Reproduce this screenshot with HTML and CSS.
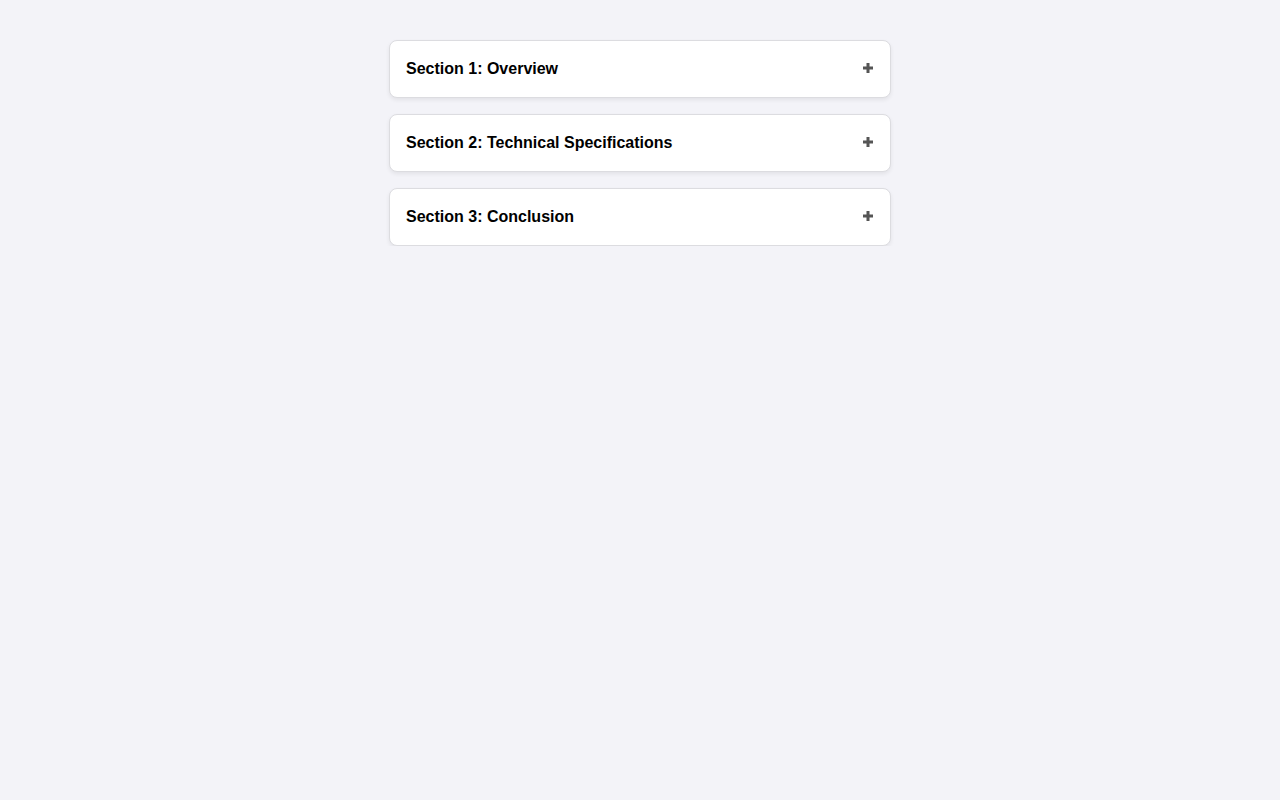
FILE: index.html
```html
<!DOCTYPE html>
<html lang="en">

<head>
	<meta charset="UTF-8">
	<title>Accordion</title>

	<link rel="stylesheet" href="styles.css">
</head>

<body>

	<main class="accordion">
		<div class="item">
			<div class="header">
				<span class="title">Section 1: Overview</span>
				<svg class="toggle" width="10" height="10" viewBox="0 0 10 10"><path d="M5 0v10M0 5h10" /></svg>
			</div>
		</div>

		<div class="item">
			<div class="header">
				<span class="title">Section 2: Technical Specifications</span>
				<svg class="toggle" width="10" height="10" viewBox="0 0 10 10"><path d="M5 0v10M0 5h10" /></svg>
			</div>
		</div>

		<div class="item">
			<div class="header">
				<span class="title">Section 3: Conclusion</span>
				<svg class="toggle" width="10" height="10" viewBox="0 0 10 10"><path d="M5 0v10M0 5h10" /></svg>
			</div>
		</div>
	</main>

</body>

</html>
```

FILE: styles.css
```css
body {
	margin: 0;
	background-color: #f3f3f8;
	font-family: "Liberation Sans", Arial, sans-serif;
}

.accordion {
	width: 502px;
	margin: 40px auto 0;
	display: flex;
	flex-direction: column;
	gap: 16px;
}

.item {
	background-color: #fff;
	border: 1px solid #dcdce0;
	border-radius: 8px;
	box-shadow: 0 2px 4px rgba(0, 0, 0, 0.07);
}

.header {
	display: flex;
	justify-content: space-between;
	align-items: center;
	padding: 16px;
	line-height: 24px;
	font-size: 16px;
	font-weight: bold;
	color: #000;
}

.toggle {
	margin-top: -3px;
	margin-right: 1px;
	stroke: #555;
	stroke-width: 3;
}
```
